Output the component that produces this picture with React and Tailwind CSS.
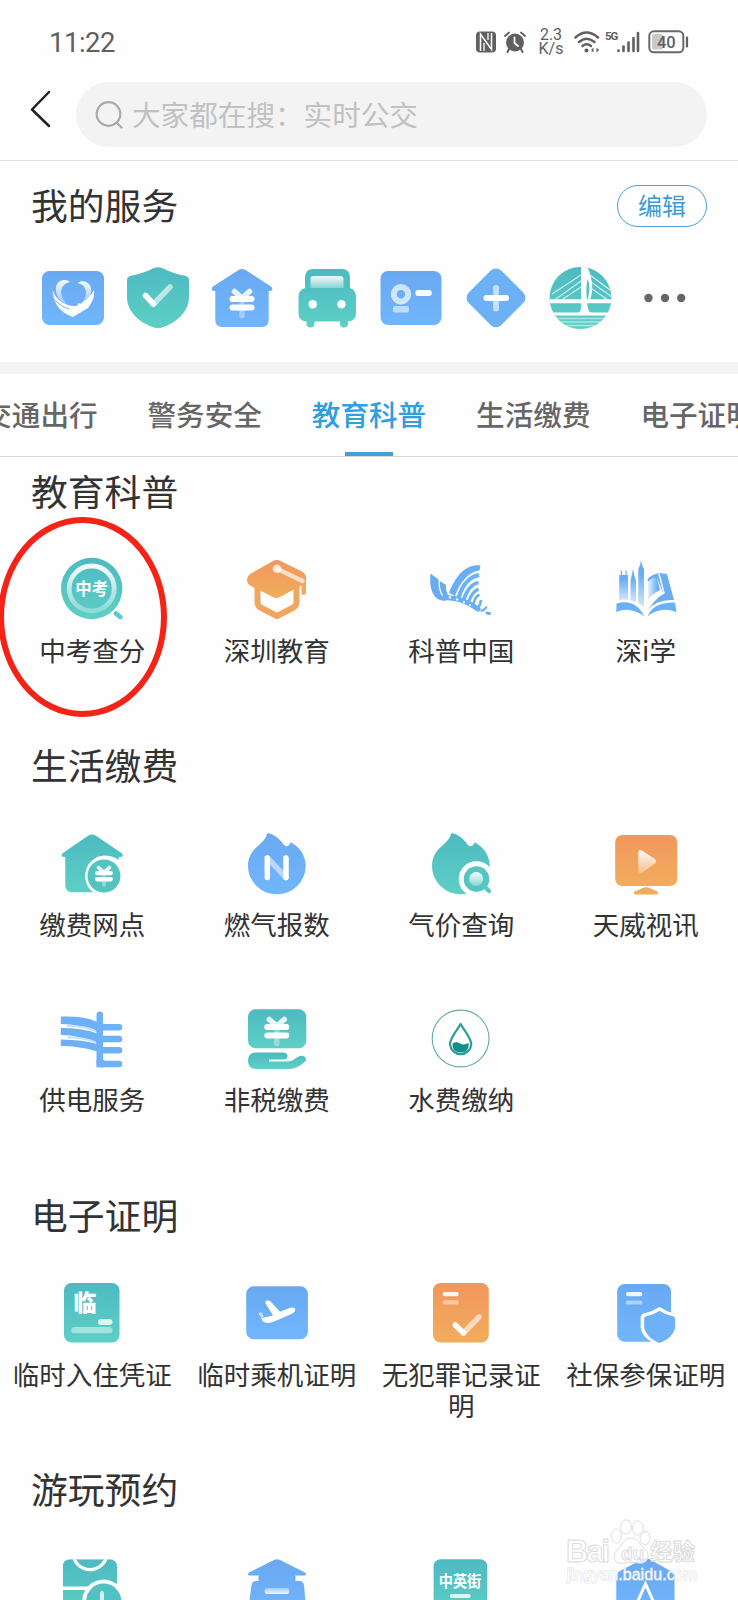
import React from 'react'

const Gradients = () => (
  <svg className="absolute w-0 h-0" aria-hidden="true">
    <defs>
      <linearGradient id="teal" x1="0" y1="0" x2="0" y2="1">
        <stop offset="0" stopColor="#4dbac2" />
        <stop offset="1" stopColor="#5ecfc5" />
      </linearGradient>
      <linearGradient id="blue" x1="0" y1="0" x2="0" y2="1">
        <stop offset="0" stopColor="#69a9f1" />
        <stop offset="1" stopColor="#71b6fc" />
      </linearGradient>
      <linearGradient id="orange" x1="0" y1="0" x2="0" y2="1">
        <stop offset="0" stopColor="#f2965f" />
        <stop offset="1" stopColor="#f1ad5b" />
      </linearGradient>
      <linearGradient id="fade" x1="0" y1="0" x2="0" y2="1">
        <stop offset="0" stopColor="#fff" stopOpacity="0.95" />
        <stop offset="1" stopColor="#fff" stopOpacity="0.3" />
      </linearGradient>
      <linearGradient id="fadeUp" x1="0" y1="0" x2="0" y2="1">
        <stop offset="0" stopColor="#fff" stopOpacity="0.35" />
        <stop offset="1" stopColor="#fff" stopOpacity="0.9" />
      </linearGradient>
      <linearGradient id="skyline" x1="0" y1="0" x2="0" y2="1">
        <stop offset="0.3" stopColor="#69aef2" />
        <stop offset="1" stopColor="#d3e8fc" />
      </linearGradient>
      <linearGradient id="page" x1="0" y1="0" x2="1" y2="0">
        <stop offset="0" stopColor="#e6f2fd" />
        <stop offset="0.8" stopColor="#69aef2" />
      </linearGradient>
    </defs>
  </svg>
)

const Icon = ({ children }) => (
  <svg viewBox="0 0 64 64" className="w-16 h-16 shrink-0" fill="none" strokeLinecap="round" strokeLinejoin="round">
    {children}
  </svg>
)

const Yuan = ({ x, y, s = 1 }) => (
  <g transform={`translate(${x} ${y}) scale(${s})`} stroke="#fff" strokeWidth="6">
    <path d="M0 1V12.500" strokeOpacity="0.35" strokeWidth="5.500" />
    <path d="M-7.500 -11.500L0 -5L7.500 -11.500" strokeWidth="5.500" strokeOpacity="0.85" />
    <path d="M-9.500 -4H9.500M-9.500 4.500H9.500" />
  </g>
)

const HeartCard = () => (
  <Icon>
    <rect x="1" y="5" width="62" height="54" rx="7.500" fill="url(#blue)" />
    <path d="M29 16C23 11.500 13.500 15 15 25C16 32 20 36 26 38C18 30 18 18 29 16Z" fill="url(#fade)" />
    <path d="M36.500 17C42 12.500 52 17 50 26C49 32 45 36 40.500 38C47 30 47 19 36.500 17Z" fill="url(#fade)" />
    <path d="M11.500 24C15 34 24 40 34 40Q38 40 37 37Q40 39 42 36C47 33 50 29 53 24C54 31 51 36 49.500 38L47 42Q40 46 32 51Q23 48 18 42Q12 35 11.500 24Z" fill="#fff" />
    <path d="M14 34Q20 41 28 43" stroke="#6eb0f6" strokeWidth="1" />
  </Icon>
)

const ShieldCheck = () => (
  <Icon>
    <path d="M28 2Q32 0.300 36 2Q48 8 60 10Q63 11 63 14V31C63 46 50 57 36 61.500Q32 63 28 61.500C14 57 1 46 1 31V14Q1 11 4 10Q16 8 28 2Z" fill="url(#teal)" />
    <path d="M27.500 38L44 21" stroke="#fff" strokeOpacity="0.6" strokeWidth="5.500" />
    <path d="M19.500 29.500L27.500 38" stroke="#fff" strokeWidth="5.500" />
  </Icon>
)

const HouseYuan = () => (
  <Icon>
    <path d="M28.500 4Q32 2 35.500 4L61 20.500Q64 23.500 60.500 25H58.700V54Q58.700 61 52 61H12Q5.300 61 5.300 54V25H3.500Q0 23.500 3 20.500Z" fill="url(#blue)" />
    <Yuan x={32} y={37} />
  </Icon>
)

const Car = () => (
  <Icon>
    <path d="M18 3H47Q55 3 55 12V22Q61 24 61 31V47Q61 55 53 55.500V57.500A4 4 0 0 1 45 57.500V55.500H19.500V57.500A4 4 0 0 1 11.500 57.500V55.500Q3.500 55 3.500 47V31Q3.500 24 10 22V12Q10 3 18 3Z" fill="url(#teal)" />
    <path d="M18.500 10H45.500Q48.500 10 48.500 13V22H15.500V13Q15.500 10 18.500 10Z" fill="url(#fade)" />
    <circle cx="17.700" cy="38.300" r="4.200" fill="#fff" />
    <circle cx="46.500" cy="38.300" r="4.200" fill="#fff" />
  </Icon>
)

const IdCard = () => (
  <Icon>
    <rect x="1.500" y="5" width="61" height="54" rx="7.500" fill="url(#blue)" />
    <circle cx="22" cy="28.300" r="7.200" stroke="#fff" strokeOpacity="0.68" strokeWidth="6" />
    <rect x="14" y="40" width="16" height="6.500" rx="2" fill="#fff" fillOpacity="0.55" />
    <rect x="36.300" y="24" width="16.500" height="6" rx="3" fill="#fff" />
  </Icon>
)

const DiamondPlus = () => (
  <Icon>
    <rect x="9" y="8.800" width="46" height="46" rx="7.500" transform="rotate(45 32 31.800)" fill="#6cb0f6" />
    <path d="M32 22V42.500" stroke="#fff" strokeOpacity="0.6" strokeWidth="6" />
    <path d="M22.500 32H42" stroke="#fff" strokeWidth="6" />
  </Icon>
)

const Bridge = () => (
  <Icon>
    <clipPath id="bridgeClip"><circle cx="32.500" cy="32" r="31" /></clipPath>
    <g clipPath="url(#bridgeClip)">
      <rect x="0" y="0" width="64" height="64" fill="url(#teal)" />
      <path d="M33 9L4 28M33 15L8 33M33 21L15 33M42 9L62 24M43 16L64 31M44 23L60 34" stroke="#fff" strokeOpacity="0.75" strokeWidth="1.100" />
      <path d="M33 0H39C45 13 46 24 41 37L39 37C42 26 42 18 39.500 13C38 20 38 30 40 43Q41 46 44 47H29Q33 46 33 42Z" fill="#fff" />
      <path d="M0 35.300H64" stroke="#fff" strokeWidth="4" />
      <path d="M0 48H64" stroke="#fff" strokeWidth="3.200" />
      <path d="M0 52.500H64M0 56H64M0 59.500H64" stroke="#fff" strokeOpacity="0.5" strokeWidth="1.300" />
    </g>
  </Icon>
)

const More = () => (
  <Icon>
    <g fill="#666">
      <circle cx="15.500" cy="32" r="4.200" />
      <circle cx="32" cy="32" r="4.200" />
      <circle cx="48.200" cy="32" r="4.200" />
    </g>
  </Icon>
)

const ExamSearch = () => (
  <Icon>
    <circle cx="31.700" cy="32.500" r="30.700" fill="url(#teal)" />
    <circle cx="31.700" cy="32.500" r="22.500" stroke="url(#fade)" strokeWidth="4.800" />
    <path d="M56 57.500L60.500 61.500" stroke="#fff" strokeWidth="8" />
    <path d="M56 57.500L60.300 61" stroke="#5bcbc4" strokeWidth="4.800" />
    <text x="31.700" y="38.800" textAnchor="middle" fontSize="16.500" fontWeight="700" fill="#fff">中考</text>
  </Icon>
)

const GradCap = () => (
  <Icon>
    <path d="M12.500 32V46Q12.500 49.500 15.500 51.500L31.800 60L48.500 51.500Q51.500 49.500 51.500 46V32" stroke="#f0a65e" strokeWidth="6" />
    <path d="M28 5Q31.800 3 35.500 5L57 15.500Q62 18.500 61 24V37Q61 39 58.500 39Q56.500 39 56.500 37V29.500L35 41Q31.500 43 28 41L6 30Q2 28 2 24Q2 20 6 17.500Z" fill="url(#orange)" />
    <path d="M32 12.800L57.500 25" stroke="#fff" strokeOpacity="0.65" strokeWidth="4.500" />
    <circle cx="32" cy="12.800" r="4.300" fill="#fff" fillOpacity="0.75" />
  </Icon>
)

const ScienceWing = () => (
  <Icon>
    <path d="M1.500 17.500L9.500 23.500C9 32 11 39 17 44.500C12 45 8 43.500 5.500 40C1.500 34 0.500 26 1.500 17.500Z" fill="#69abf1" />
    <path d="M10.700 25L17 29Q16.500 35 19.500 40L18 44C13 39 10.500 33 10.700 25Z" fill="#69abf1" />
    <path d="M20 37C27 19 37 8 51.500 9.500L50.500 14.500C40 15.500 31 26 26 40Z" fill="#6aaff4" />
    <g stroke="#6cb2f7" strokeLinecap="butt">
      <path d="M29.500 42C33 30 40 21 50 19" strokeWidth="4.200" />
      <path d="M35 43C38 34 42 28 49.500 26.500" strokeWidth="3.800" />
      <path d="M40 45C42 39 45 35 49.500 33" strokeWidth="3.200" />
      <path d="M44.500 48C45.500 43 47 40 50.500 38.800" strokeWidth="2.600" />
      <path d="M47 53Q51 51 52 44" strokeWidth="2.600" />
      <path d="M51.500 54.500Q55.500 55 57.500 50.500" strokeWidth="2.200" />
    </g>
    <path d="M14 42Q31 40 49 53" stroke="#6aaef3" strokeWidth="5" />
    <path d="M58 57L60.500 57.500" stroke="#6aaef3" strokeWidth="3" />
    <g fill="#fff">
      <circle cx="21" cy="41.500" r="1.200" />
      <circle cx="28" cy="43.500" r="1.200" />
      <circle cx="35" cy="46" r="1.100" />
      <circle cx="41" cy="49" r="1" />
    </g>
  </Icon>
)

const CityBook = () => (
  <Icon>
    <path d="M5.200 19H6.800V14.500H8V19H11.500V14.500H12.700V19H14V44Q9 43 5.200 44.500Z" fill="url(#skyline)" />
    <path d="M19 13L20 18L22 25V46L16.500 44.500V25L18 18Z" fill="url(#skyline)" />
    <path d="M27 4L28 9L30 13V51L24.300 47V13L26 9Z" fill="url(#skyline)" />
    <path d="M2.500 47.500Q21 42 30.500 60.500Q16 50 2.300 56Z" fill="#6ab0f5" />
    <path d="M33.500 23Q38 18 46 17L53 18L60 44Q43 43 33.500 54Q41 44 49 37L43 22Q38 22 34 26Z" fill="#69aef2" />
    <path d="M34 26Q38 21 43 22L46 34Q38 38 34 44Z" fill="url(#page)" />
    <path d="M45 18L50 37Q39 42 34 50" stroke="#fff" strokeWidth="1.400" />
    <path d="M33.500 60.500Q39 46 61 46.500L62.500 56Q46 50 33.500 60.500Z" fill="#6ab0f5" />
  </Icon>
)

const HouseSpot = () => (
  <Icon>
    <path d="M28.500 4.500Q32 2.500 35.500 4.500L61.500 22Q64.500 25 61 26H58.700V54Q58.700 61.300 52 61.300H12Q5.300 61.300 5.300 54V26H3.500Q0 25 2.800 22Z" fill="url(#teal)" />
    <path d="M44 24.500A20.500 20.500 0 1 0 64 54V32L58 28.500Q52 24.500 44 24.500Z" fill="#fff" />
    <circle cx="44" cy="45" r="16.500" fill="#54c4c3" />
    <Yuan x={44} y={45} s={0.72} />
  </Icon>
)

const FLAME = 'M23 2.300C30 3.500 35 8.500 38.500 13.500Q41 16.500 43.500 14.500Q45 13.500 45.500 11.300C55 16 60.700 25 60.700 35A28.800 28.300 0 0 1 3 35C3 25 8 19 14 14C18 10.500 21 7 22 3Q22.200 2 23 2.300Z'

const GasMeter = () => (
  <Icon>
    <path d={FLAME} fill="url(#blue)" />
    <path d="M22.500 27L41 46.500" stroke="#fff" strokeOpacity="0.5" strokeWidth="5.500" />
    <path d="M22.300 27V46.500M41 27V46.500" stroke="#fff" strokeWidth="5.500" />
  </Icon>
)

const GasPrice = () => (
  <Icon>
    <path d={FLAME} fill="url(#teal)" />
    <circle cx="47.500" cy="48" r="17.800" fill="#fff" />
    <circle cx="47.500" cy="48" r="12.800" fill="#55c5c4" />
    <path d="M56.500 56.500L60 60" stroke="#5bcac5" strokeWidth="4.500" />
    <circle cx="47.200" cy="48" r="7" fill="url(#fade)" />
  </Icon>
)

const Tv = () => (
  <Icon>
    <rect x="1.200" y="4" width="62" height="51" rx="7" fill="url(#orange)" />
    <path d="M24.300 22Q24.300 18 28 19.500L41 28Q43.500 30 41 32.500L28.500 41.500Q24.300 43 24.300 39Z" fill="url(#fade)" />
    <path d="M30 56.500Q32 55.800 34 56.500L43.500 60.500Q45 63.500 42 63.500H22Q19 63.500 20.500 60.500Z" fill="#f0ad58" />
  </Icon>
)

const PowerGrid = () => (
  <Icon>
    <g fill="#6db0f7">
      <path d="M0.800 11.600Q25 11 37 17V27.500Q20 19 0.800 19Z" />
      <path d="M0.800 23Q24 23 37 28.500V39Q20 30 0.800 30Z" />
      <path d="M0.800 34.600Q24 35 37 39V46.500Q20 41 0.800 41Z" />
    </g>
    <path d="M8 21Q25 21 35.500 26M8 32.300Q25 32.500 35.500 37.500" stroke="#c4e0fc" strokeWidth="2" />
    <path d="M39.800 9.800V59M39.800 22.300H59M39.800 34H59M39.800 45.300H59M39.800 59H59" stroke="#6db2f9" strokeWidth="6.600" />
    <rect x="36.500" y="55" width="8" height="7.300" fill="#6db2f9" />
  </Icon>
)

const TaxPay = () => (
  <Icon>
    <rect x="3" y="4.300" width="58.300" height="39" rx="7.500" fill="url(#teal)" />
    <Yuan x={31.800} y={26} />
    <path d="M11 47.500H38Q42.500 47.500 42.500 51Q42.500 54.500 38 54.500H24V56.500H41Q47 56.500 51 53Q55 50 58.500 51Q63 53.500 59.500 57Q52 64 44 64H11Q3 64 3 55.700Q3 47.500 11 47.500Z" fill="url(#teal)" />
  </Icon>
)

const WaterDrop = () => (
  <Icon>
    <circle cx="31.600" cy="33.500" r="28.400" stroke="#69aaa6" strokeWidth="1.100" />
    <path d="M31.600 19C35 25.500 42.300 32.500 42.300 39.500A10.700 10.700 0 0 1 21 39.500C21 32.500 28 25.500 31.600 19Z" stroke="#2f9a97" strokeWidth="2.200" />
    <path d="M23.500 38.500Q27.500 36 31 38.500Q35 40.500 39.700 38Q40.500 47.500 31.600 47.500Q22.500 47 23.500 38.500Z" fill="#128f8c" />
  </Icon>
)

const StayProof = () => (
  <Icon>
    <rect x="4" y="3" width="55.500" height="59.500" rx="7.500" fill="url(#teal)" />
    <text x="13.500" y="31" fontSize="23" fontWeight="900" fill="#fff">临</text>
    <rect x="38" y="39" width="14.500" height="6" rx="3" fill="#fff" fillOpacity="0.8" />
    <rect x="11.400" y="47" width="41" height="6.300" rx="2.500" fill="#fff" fillOpacity="0.45" />
  </Icon>
)

const PlaneProof = () => (
  <Icon>
    <rect x="1.200" y="6.200" width="61.700" height="53" rx="7.500" fill="url(#blue)" />
    <path d="M16.200 38L19.500 37.500L28 35.500L20.300 23Q20 20.500 22 20.500Q24.500 20.200 25.500 21.500L35 31.700L44.500 28Q49 26.500 50.200 29Q50.800 31.500 47 33.700L28 42Q22.500 44 19.500 42.300Q17 41 16.200 38Z" fill="#fff" />
    <path d="M13.500 33Q15.500 31.500 17 33L19 37L16 37.500Q14 35.500 13.500 33Z" fill="#fff" fillOpacity="0.6" />
  </Icon>
)

const RecordProof = () => (
  <Icon>
    <rect x="4" y="3" width="55.800" height="59.500" rx="7.500" fill="url(#orange)" />
    <rect x="13.700" y="12" width="16" height="4.200" rx="2" fill="#fff" fillOpacity="0.9" />
    <rect x="13.700" y="20.300" width="16" height="4.300" rx="1.500" fill="#fff" fillOpacity="0.45" />
    <path d="M34.400 53L50 37" stroke="#fff" strokeOpacity="0.6" strokeWidth="5.500" />
    <path d="M26.300 45L34.400 53" stroke="#fff" strokeWidth="5.500" />
  </Icon>
)

const InsureProof = () => (
  <Icon>
    <rect x="3.200" y="4" width="53.800" height="57.700" rx="7.500" fill="url(#blue)" />
    <rect x="12" y="12" width="16.300" height="4.200" rx="2" fill="#fff" fillOpacity="0.9" />
    <rect x="12" y="20.500" width="16.300" height="4" rx="1.500" fill="#fff" fillOpacity="0.45" />
    <path d="M45.500 29Q52 33.500 59 35Q61.500 35.500 61.500 38V46C61.500 55 53 61 45.500 63.500C38 61 28.500 55 28.500 46V38Q28.500 35.500 31 35Q39 33.500 45.500 29Z" fill="#71b4fa" stroke="#fff" strokeWidth="3.800" />
    <path d="M45.500 31Q52 35 59 36.300Q61.200 36.800 61.200 39V46C61.200 54 53.500 60 45.500 63C38 60 30.300 54 30.300 46V39Q30.300 36.800 32.500 36.300Q39 35 45.500 31Z" fill="#6eb1f8" />
  </Icon>
)

const Ticket = () => (
  <Icon>
    <clipPath id="ticketClip"><rect x="2.800" y="4.200" width="54.200" height="59" rx="7" /></clipPath>
    <g clipPath="url(#ticketClip)">
      <rect x="2.800" y="4.200" width="54.200" height="59" fill="url(#teal)" />
      <circle cx="30" cy="-2.400" r="17" stroke="#fff" strokeWidth="3.400" />
      <path d="M0 33.200H28" stroke="#fff" strokeWidth="3.400" />
    </g>
    <circle cx="43.700" cy="46" r="21.500" fill="#fff" />
    <circle cx="43.700" cy="46" r="17.500" fill="#52c1c3" />
    <path d="M42 38V48H48" stroke="#fff" strokeOpacity="0.75" strokeWidth="4" />
  </Icon>
)

const Pavilion = () => (
  <Icon>
    <path d="M29 5Q32 3.400 35 5L60 17.500Q62.500 20.300 59 20.500H50.500V26H55Q58.500 26.500 59 30L62 64H2L6.500 30Q7 26.500 10.500 26H13.500V20.500H5Q1.500 20.300 4 17.500Z" fill="url(#blue)" />
    <rect x="19.700" y="33" width="24.500" height="6" rx="2" fill="url(#fadeUp)" />
  </Icon>
)

const StreetSign = () => (
  <Icon>
    <rect x="4.600" y="4.200" width="53.700" height="59" rx="7" fill="url(#teal)" />
    <text x="31" y="32.300" textAnchor="middle" fontSize="15.500" textLength="42.500" lengthAdjust="spacingAndGlyphs" fontWeight="700" fill="#fff">中英街</text>
    <rect x="21" y="39" width="20.500" height="4" rx="1.500" fill="#fff" fillOpacity="0.8" />
  </Icon>
)

const Tower = () => (
  <Icon>
    <path d="M29 4Q32 1.500 35 4L57.500 16.500Q60.500 18.500 60.500 22V64H2.300V22Q2.300 18.500 5 16.500Z" fill="url(#blue)" />
    <path d="M22 50L31.500 29L41 50" stroke="#fff" strokeWidth="3" strokeLinejoin="miter" />
  </Icon>
)

const myServices = [HeartCard, ShieldCheck, HouseYuan, Car, IdCard, DiamondPlus, Bridge, More]

const tabs = ['交通出行', '警务安全', '教育科普', '生活缴费', '电子证明']

const sections = [
  {
    title: '教育科普',
    items: [
      { icon: ExamSearch, label: '中考查分' },
      { icon: GradCap, label: '深圳教育' },
      { icon: ScienceWing, label: '科普中国' },
      { icon: CityBook, label: '深i学' },
    ],
  },
  {
    title: '生活缴费',
    items: [
      { icon: HouseSpot, label: '缴费网点' },
      { icon: GasMeter, label: '燃气报数' },
      { icon: GasPrice, label: '气价查询' },
      { icon: Tv, label: '天威视讯' },
      { icon: PowerGrid, label: '供电服务' },
      { icon: TaxPay, label: '非税缴费' },
      { icon: WaterDrop, label: '水费缴纳' },
    ],
  },
  {
    title: '电子证明',
    items: [
      { icon: StayProof, label: '临时入住凭证' },
      { icon: PlaneProof, label: '临时乘机证明' },
      { icon: RecordProof, label: '无犯罪记录证明' },
      { icon: InsureProof, label: '社保参保证明' },
    ],
  },
  {
    title: '游玩预约',
    items: [
      { icon: Ticket, label: '' },
      { icon: Pavilion, label: '' },
      { icon: StreetSign, label: '' },
      { icon: Tower, label: '' },
    ],
  },
]

const StatusBar = () => (
  <div className="h-[82px] pl-[49px] pr-[49px] flex items-center justify-between text-[#606060]">
    <span className="text-[27.500px] leading-none font-normal font-['Roboto',sans-serif] tracking-[-0.500px] pt-1">11:22</span>
    <div className="flex items-center pt-[2px]">
      <svg viewBox="0 0 20 22" className="w-5 h-[22px]">
        <rect x="0" y="0.500" width="20" height="21" rx="4" fill="#606060" />
        <path d="M4.500 20V3L15.500 18.500V2" fill="none" stroke="#fff" strokeWidth="1.500" />
        <path d="M8 20V12M12 2V9" stroke="#fff" strokeWidth="1.300" />
      </svg>
      <svg viewBox="0 0 22 22" className="w-[22px] h-[22px] ml-2" fill="none" stroke="#606060" strokeLinecap="round">
        <circle cx="11" cy="11.500" r="9" fill="#606060" stroke="none" />
        <path d="M1 5L5 1.500M21 5L17 1.500" strokeWidth="1.800" />
        <path d="M5 18L3.500 21M17 18L18.500 21" strokeWidth="2" />
        <path d="M10.500 6.500V12L14 15" stroke="#fff" strokeWidth="1.800" />
      </svg>
      <div className="ml-[13px] w-6 flex flex-col items-center text-[16px] leading-[14px] font-['Roboto',sans-serif]">
        <span>2.3</span>
        <span>K/s</span>
      </div>
      <svg viewBox="0 0 27 22" className="w-[27px] h-[22px] ml-[11px]" fill="none" stroke="#606060" strokeLinecap="round">
        <path d="M1.500 6.500Q12.500 -3.500 24 6.500" strokeWidth="2.500" />
        <path d="M5 11Q12.500 4.500 20.500 11" strokeWidth="2.500" />
        <path d="M8.500 15Q12.500 11.500 17 15" strokeWidth="2.500" />
        <circle cx="12.500" cy="19.500" r="2" fill="#606060" stroke="none" />
        <path d="M19.500 16.500V21.500L17 19ZM22.500 21.500V16.500L25 19Z" fill="#606060" stroke="none" />
      </svg>
      <div className="flex items-start h-[22px] ml-[4px]">
        <span className="text-[11.500px] leading-[11px] font-bold w-[11px] tracking-[-1px] font-['Roboto',sans-serif]">5G</span>
        <svg viewBox="0 0 24 22" className="w-6 h-[22px]" stroke="#606060" strokeWidth="2.600" strokeLinecap="round">
          <path d="M2.500 20V19.500M7.500 20V15.500M12.500 20V11.500M17.500 20V7M22 20V2" />
        </svg>
      </div>
      <svg viewBox="0 0 41 24" className="w-[41px] h-6 ml-[8px]">
        <rect x="1.300" y="1.300" width="34" height="21" rx="4.500" fill="none" stroke="#6a6a6a" strokeWidth="2" />
        <rect x="4" y="4" width="11" height="15.500" rx="2" fill="#c9c9c9" />
        <path d="M39 7.500V16.500" stroke="#606060" strokeWidth="2.200" strokeLinecap="round" />
        <text x="18.300" y="18" textAnchor="middle" fontSize="16.500" fontWeight="500" fill="#606060" fontFamily="Roboto, sans-serif">40</text>
      </svg>
    </div>
  </div>
)

const SearchBar = () => (
  <div className="h-[79px] border-b border-[#dedede] flex items-start pl-[30px] pr-[31px]">
    <svg viewBox="0 0 22 38" className="w-[22px] h-[38px] mt-2" fill="none" stroke="#222" strokeWidth="2.500" strokeLinecap="round" strokeLinejoin="round">
      <path d="M19 2L2 19.500L19 36" />
    </svg>
    <div className="ml-6 flex-1 h-[65px] rounded-full bg-[#f3f3f3] flex items-center pl-[19px]">
      <svg viewBox="0 0 28 28" className="w-7 h-7" fill="none" stroke="#a9a9a9" strokeWidth="2.200" strokeLinecap="round">
        <circle cx="13.500" cy="13" r="11.800" />
        <path d="M22 22L26.500 26.500" />
      </svg>
      <span className="ml-[9px] text-[28.600px] leading-none text-[#c1c1c1] whitespace-nowrap">大家都在搜：实时公交</span>
    </div>
  </div>
)

const Section = ({ title, items, first }) => (
  <section>
    <h2 className={`pl-[31px] pb-1 flex items-center text-[36.800px] leading-none text-[#333] ${first ? 'h-[70px]' : 'h-[100px] pt-[30px]'}`}>{title}</h2>
    <div className="grid grid-cols-4">
      {items.map((it, i) => (
        <div key={i} className="h-[174.700px] pt-[29px] flex flex-col items-center">
          <it.icon />
          <span className="mt-[13.500px] w-[168px] text-center text-[26.500px] leading-[31px] text-[#333]">{it.label}</span>
        </div>
      ))}
    </div>
  </section>
)

const Watermark = () => (
  <svg viewBox="0 0 140 80" className="absolute left-[562px] top-[1515px] w-[140px] h-20" fontFamily="'Liberation Sans', 'Noto Sans CJK SC', sans-serif">
    <g fill="#fff" fillOpacity="0.8" stroke="#dcdcdc" strokeWidth="1">
      <ellipse cx="54.500" cy="21" rx="5" ry="7" />
      <ellipse cx="64" cy="12" rx="5.500" ry="7" />
      <ellipse cx="76" cy="13" rx="5.500" ry="7" />
      <ellipse cx="83" cy="23" rx="5" ry="6.500" />
      <path d="M69 23C76 23 78 30 83 34C90 42 84 50 76 48Q69 46 62 48C53 50 49 42 55 35C60 31 62 23 69 23Z" />
      <text x="4" y="47" fontSize="31" fontWeight="700" textLength="44">Bai</text>
      <text x="59" y="45" fontSize="19" fontWeight="700">du</text>
      <text x="88" y="45" fontSize="23" fontWeight="700" textLength="45" lengthAdjust="spacingAndGlyphs">经验</text>
    </g>
    <text x="5" y="65" fontSize="16" textLength="130" fill="#fff" fillOpacity="0.9" stroke="#dadada" strokeOpacity="0.6" strokeWidth="1.400" paintOrder="stroke">jingyan.baidu.com</text>
  </svg>
)

const App = () => {
  return (
    <div className="relative w-full h-[1600px] overflow-hidden bg-[#fefefe] font-['Noto_Sans_CJK_SC',sans-serif]">
      <Gradients />
      <StatusBar />
      <SearchBar />

      <div className="h-[201px] px-[31px]">
        <div className="h-[105px] pt-[21px] flex items-start justify-between">
          <h2 className="text-[36.800px] leading-[44px] text-[#333]">我的服务</h2>
          <button className="mt-[2.500px] w-[90px] h-[42px] rounded-full border-[1.500px] border-[#4a9fd6] text-2xl leading-none text-[#3f9bd6] pb-px">编辑</button>
        </div>
        <div className="grid grid-cols-8">
          {myServices.map((S, i) => (
            <div key={i} className="flex justify-center"><S /></div>
          ))}
        </div>
      </div>

      <div className="h-3 bg-[#f3f3f3]" />
      <nav className="h-[83px] border-b border-[#dadada] flex justify-center">
        {tabs.map((t) => (
          <div key={t} className={`shrink-0 w-[164.300px] flex flex-col items-center justify-between text-[28.600px] leading-none font-medium ${t === '教育科普' ? 'text-[#2f9fe0]' : 'text-[#666]'}`}>
            <span className="pt-[26px] whitespace-nowrap">{t}</span>
            {t === '教育科普' && <span className="w-12 h-1 bg-[#479fd8]" />}
          </div>
        ))}
      </nav>

      {sections.map((s, i) => (
        <Section key={s.title} title={s.title} items={s.items} first={i === 0} />
      ))}

      {/* hand-drawn highlight over the first service */}
      <div className="absolute left-[-2px] top-[517px] w-[169px] h-[200px] rounded-[50%] border-[6px] border-[#f32317]" />
      <Watermark />
    </div>
  )
}

export default App
